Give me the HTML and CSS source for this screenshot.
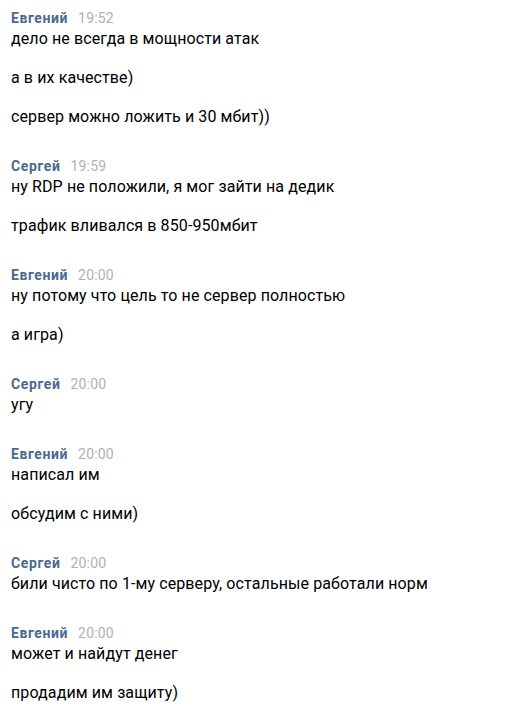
FILE: index.html
```html
<!DOCTYPE html>
<html lang="ru">
<head>
    <meta charset="UTF-8">
    <meta name="viewport" content="width=device-width, initial-scale=1.0">
    <title>Переписка</title>
    <link rel="stylesheet" href="styles.css">
</head>
<body>
    <div class="chat">
        <div class="message">
            <div class="message-head"><span class="author">Евгений</span><span class="time">19:52</span></div>
            <div class="message-body">
                <p>дело не всегда в мощности атак</p>
                <p>а в их качестве)</p>
                <p>сервер можно ложить и 30 мбит))</p>
            </div>
        </div>
        <div class="message">
            <div class="message-head"><span class="author">Сергей</span><span class="time">19:59</span></div>
            <div class="message-body">
                <p>ну RDP не положили, я мог зайти на дедик</p>
                <p>трафик вливался в 850-950мбит</p>
            </div>
        </div>
        <div class="message">
            <div class="message-head"><span class="author">Евгений</span><span class="time">20:00</span></div>
            <div class="message-body">
                <p>ну потому что цель то не сервер полностью</p>
                <p>а игра)</p>
            </div>
        </div>
        <div class="message">
            <div class="message-head"><span class="author">Сергей</span><span class="time">20:00</span></div>
            <div class="message-body">
                <p>угу</p>
            </div>
        </div>
        <div class="message">
            <div class="message-head"><span class="author">Евгений</span><span class="time">20:00</span></div>
            <div class="message-body">
                <p>написал им</p>
                <p>обсудим с ними)</p>
            </div>
        </div>
        <div class="message">
            <div class="message-head"><span class="author">Сергей</span><span class="time">20:00</span></div>
            <div class="message-body">
                <p>били чисто по 1-му серверу, остальные работали норм</p>
            </div>
        </div>
        <div class="message">
            <div class="message-head"><span class="author">Евгений</span><span class="time">20:00</span></div>
            <div class="message-body">
                <p>может и найдут денег</p>
                <p>продадим им защиту)</p>
            </div>
        </div>
    </div>
</body>
</html>
```

FILE: styles.css
```css
body {
    font-family: Roboto, 'Liberation Sans', sans-serif;
    margin: 0;
    padding: 0;
    background: #fff;
    color: #000;
}
.chat {
    padding: 10px 11px;
    display: flex;
    flex-direction: column;
    gap: 12px;
}
.message-head {
    font-size: 14px;
    line-height: 16px;
    margin-bottom: 3px;
}
.author {
    font-weight: bold;
    color: #4a6a90;
    letter-spacing: 0.6px;
}
.time {
    color: #b0b0b0;
    margin-left: 10px;
    letter-spacing: 0.2px;
}
.message-body p {
    margin: 0 0 19px;
    font-size: 16px;
    line-height: 20px;
    letter-spacing: 0.1px;
}
```
